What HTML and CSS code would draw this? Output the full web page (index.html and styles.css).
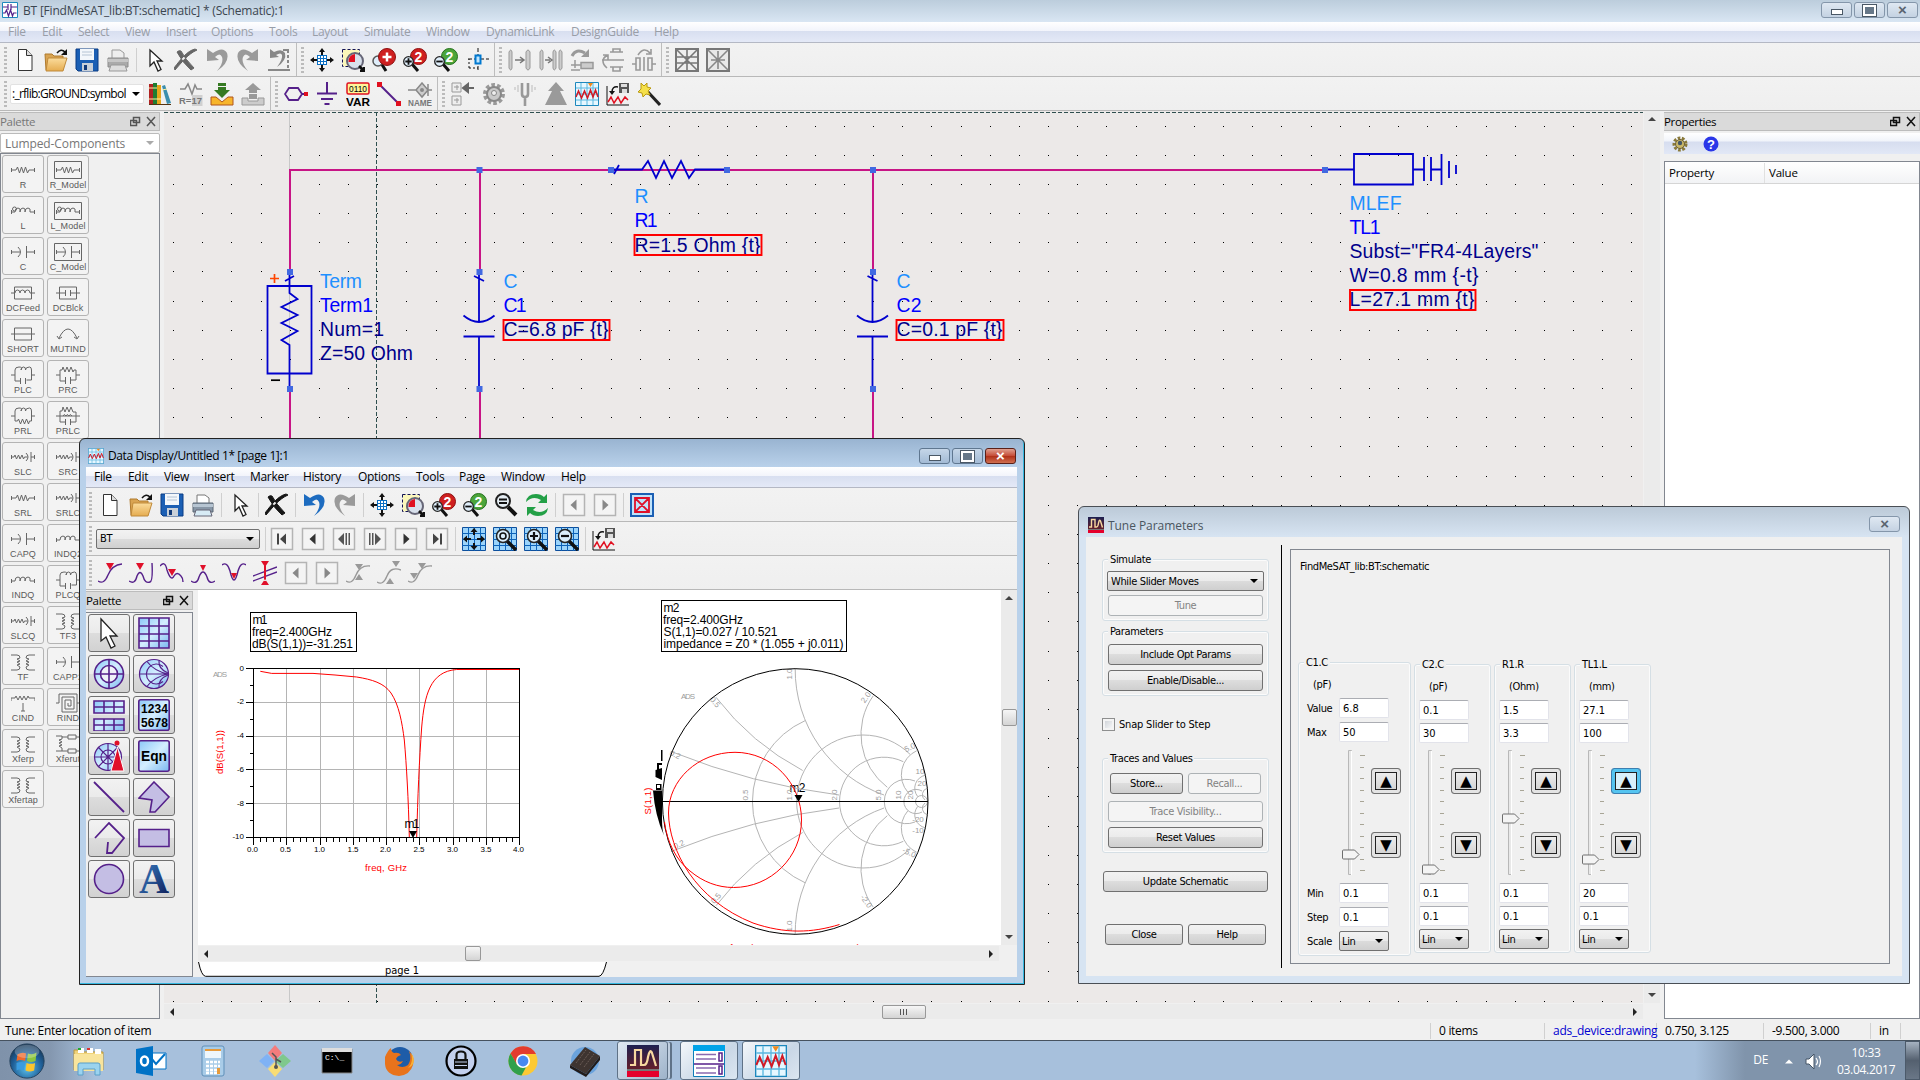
FILE: index.html
```html
<!DOCTYPE html>
<html lang="en">
<head>
<meta charset="utf-8">
<title>BT [FindMeSAT_lib:BT:schematic] * (Schematic):1</title>
<link rel="stylesheet" href="styles.css">
</head>
<body>
<svg class="defs" width="0" height="0" aria-hidden="true">
<defs>
<linearGradient id="gBlue" x1="0" y1="0" x2="1" y2="1"><stop offset="0" stop-color="#8cc8f8"/><stop offset=".5" stop-color="#d4eeff"/><stop offset="1" stop-color="#7ab8f0"/></linearGradient>
<linearGradient id="gFolder" x1="0" y1="0" x2="0" y2="1"><stop offset="0" stop-color="#fbdc9c"/><stop offset="1" stop-color="#e5ac50"/></linearGradient>
<linearGradient id="gLetter" x1="0" y1="0" x2="1" y2="1"><stop offset="0" stop-color="#3f8ad0"/><stop offset="1" stop-color="#0a1550"/></linearGradient>
<radialGradient id="gOrb" cx=".5" cy=".7" r=".7"><stop offset="0" stop-color="#5ec4ee"/><stop offset=".6" stop-color="#1f6099"/><stop offset="1" stop-color="#16324f"/></radialGradient>
<linearGradient id="gAds" x1="0" y1="0" x2="0" y2="1"><stop offset="0" stop-color="#1d2050"/><stop offset="1" stop-color="#641f2c"/></linearGradient>

<symbol id="i-new" viewBox="0 0 24 24"><path d="M5.500 1.500h8l5.500 6v15H5.500z" fill="#fff" stroke="#333"/><path d="M13.500 1.500v6H19" fill="#ddd" stroke="#333"/></symbol>
<symbol id="i-open" viewBox="0 0 24 24"><path d="M1 6h7l2 2h9v14H2z" fill="#d9a452" stroke="#b07a2c"/><path d="M4 10h19l-4 13H2z" fill="url(#gFolder)" stroke="#c08a3a"/><path d="M13 5q4-5 8-1" fill="none" stroke="#111" stroke-width="1.500"/><path d="M23 1v6h-6z" fill="#111"/></symbol>
<symbol id="i-save" viewBox="0 0 24 24"><path d="M1 1h22v22H3l-2-2z" fill="#1b5fb4" stroke="#0b3d84"/><path d="M5 1h14v11H5z" fill="#f3f7fb"/><path d="M7 4h10M7 7h10" stroke="#b5c4d4"/><path d="M7 15h11v8H7z" fill="#c9d0d8"/><path d="M9 17h3v5H9z" fill="#123a78"/></symbol>
<symbol id="i-print" viewBox="0 0 24 24"><path d="M6 10V2h8l4 3v5" fill="#fff" stroke="#777"/><path d="M2 10h20v9H2z" fill="#8796a6" stroke="#5b6774"/><path d="M2 11h20v3H2z" fill="#b7c5d2"/><path d="M5 17h14l2 6H3z" fill="#d7ebf5" stroke="#667"/></symbol>
<symbol id="i-printg" viewBox="0 0 24 24"><path d="M6 10V2h8l4 3v5" fill="#eee" stroke="#999"/><path d="M2 10h20v9H2z" fill="#aaa" stroke="#8c8c8c"/><path d="M2 11h20v3H2z" fill="#c6c6c6"/><path d="M5 17h14l2 6H3z" fill="#ddd" stroke="#999"/></symbol>
<symbol id="i-arrow" viewBox="0 0 24 24"><path d="M7 2v16l4-4 4 9 3-1.500-4-8.500h5z" fill="#fff" stroke="#222" stroke-width="1.300"/></symbol>
<symbol id="i-x" viewBox="0 0 24 24"><path d="M1 22C8 14 14 6 23 2l-2-1C13 3 7 11 0 20zM3 4q2-2 4-1 4 8 13 17l-3 2Q8 14 3 4z" fill="currentColor" stroke="currentColor"/></symbol>
<symbol id="i-undo" viewBox="0 0 24 24"><path d="M2 1v12l12-1-4-3q5-5 7 0 2 6-5 14 13-9 10-18-4-7-14 0z" fill="currentColor"/></symbol>
<symbol id="i-redo" viewBox="0 0 24 24"><path d="M22 1v12l-12-1 4-3q-5-5-7 0-2 6 5 14Q-1 14 2 5q4-7 14 0z" fill="currentColor"/></symbol>
<symbol id="i-undoall" viewBox="0 0 24 24"><path d="M3 1v9l9-1-3-2q5-3 6 0 1 4-5 12 10-7 8-14-3-5-11-1z" fill="currentColor"/><path d="M21 2v18" stroke="currentColor" stroke-width="2" stroke-dasharray="3 2"/><path d="M16 2h6M1 22h22" stroke="currentColor" stroke-width="2"/></symbol>
<symbol id="i-fit" viewBox="0 0 24 24"><path d="M7 7h10v10H7z" fill="#fff"/><path d="M7.500 7v10M10.500 7v10M13.500 7v10M16.500 7v10M7 7.500h10M7 10.500h10M7 13.500h10M7 16.500h10" stroke="#0b6fc4"/><path d="M12 0l3 4h-2v3h-2V4H9zM12 24l3-4h-2v-3h-2v3H9zM0 12l4-3v2h3v2H4v2zM24 12l-4-3v2h-3v2h3v2z" fill="#111"/></symbol>
<symbol id="i-zarea" viewBox="0 0 24 24"><path d="M1.500 1.500h17v17h-17z" fill="#fbf7ba" stroke="#115" stroke-dasharray="3 2"/><circle cx="14" cy="13" r="8" fill="#d8e0ec" stroke="#667" stroke-width="2"/><path d="M14 13V6a7 7 0 0 0-6.500 8H14z" fill="#e01020"/><path d="M18 18l5 5M23 19v4h-4" stroke="#111" stroke-width="2.500"/></symbol>
<symbol id="i-zplus" viewBox="0 0 24 24"><path d="M9 15l5 8" stroke="#111" stroke-width="3"/><circle cx="6" cy="13" r="5" fill="#dfeefa" stroke="#555" stroke-width="1.500"/><circle cx="15" cy="9" r="8.500" fill="#cf1f1f" stroke="#8c1010"/><path d="M15 4.500v9M10.500 9h9" stroke="#fff" stroke-width="2.500"/></symbol>
<symbol id="i-z2r" viewBox="0 0 24 24"><path d="M9 16l6 7" stroke="#111" stroke-width="3"/><circle cx="15.500" cy="8.500" r="8" fill="#cf1f1f" stroke="#8c1010"/><circle cx="5.500" cy="13.500" r="4.800" fill="#dfeefa" stroke="#222" stroke-width="1.300"/><path d="M5.500 10.300v6.400M2.300 13.500h6.400" stroke="#111" stroke-width="1.800"/><text x="11.500" y="14" class="znum">2</text></symbol>
<symbol id="i-z2g" viewBox="0 0 24 24"><path d="M9 16l6 7" stroke="#111" stroke-width="3"/><circle cx="15.500" cy="8.500" r="8" fill="#4ca53a" stroke="#24701c"/><circle cx="5.500" cy="13.500" r="4.800" fill="#dfeefa" stroke="#222" stroke-width="1.300"/><path d="M2.300 13.500h6.400" stroke="#111" stroke-width="1.800"/><text x="11.500" y="14" class="znum">2</text></symbol>
<symbol id="i-center" viewBox="0 0 24 24"><path d="M13 0v24M3 11h21" stroke="#111" stroke-dasharray="4 2"/><path d="M10.500 7.500h5v8h-5z" fill="#bfe6ff" stroke="#0078d0" stroke-width="2"/><path d="M4 20V11M4 20h9" stroke="#111" stroke-dasharray="2 2"/></symbol>
<symbol id="i-bars1" viewBox="0 0 24 24"><path d="M1 4q2-4 3 0v16q-1 4-3 0zM18 4q2-4 4 0v16q-2 4-4 0z" fill="#ccc" stroke="#999"/><path d="M7 12h8M12 9l4 3-4 3" stroke="#777" stroke-width="1.500" fill="none"/></symbol>
<symbol id="i-bars2" viewBox="0 0 24 24"><path d="M1 4q2-4 3 0v16q-1 4-3 0zM14 4q1-4 3 0v16q-2 4-3 0zM20 4q1-4 3 0v16q-2 4-3 0z" fill="#ccc" stroke="#999"/><path d="M6 12h5M9 9l4 3-4 3" stroke="#777" stroke-width="1.500" fill="none"/></symbol>
<symbol id="i-rot" viewBox="0 0 24 24"><path d="M2 8q4-8 13-3" fill="none" stroke="#999" stroke-width="3"/><path d="M19 1v8h-8z" fill="#999"/><path d="M11 14.500h12v6H11zM5 12v8M1 17h10M1 22h9" fill="#ccc" stroke="#999" stroke-width="1.500"/></symbol>
<symbol id="i-flipv" viewBox="0 0 24 24"><path d="M9 4h13M12 1h7v3h-7zM9 19h13M12 19h7v4h-7zM6 20q-8-7 0-13M1 12h22M2 7h5v5" fill="none" stroke="#999" stroke-width="1.600"/></symbol>
<symbol id="i-fliph" viewBox="0 0 24 24"><path d="M4 10h4v12H4zM16 10h4v12h-4zM0 16h4M20 16h4M12 9v14M6 7q6-9 12-2M19 1v5h-5" fill="none" stroke="#999" stroke-width="1.600"/></symbol>
<symbol id="i-deact" viewBox="0 0 24 24"><path d="M1 1h22v22H1z" fill="#eee" stroke="#777" stroke-width="2"/><path d="M2 2l20 20M22 2L2 22M2 9h20M2 15h20M12 2v20" stroke="#777" stroke-width="1.600"/></symbol>
<symbol id="i-deact2" viewBox="0 0 24 24"><path d="M1 1h22v22H1z" fill="#e8e8e8" stroke="#777" stroke-width="2"/><path d="M2 2l20 20M22 2L2 22M5 12h14M12 3v18" stroke="#888" stroke-width="1.600"/></symbol>
<symbol id="i-books" viewBox="0 0 24 24"><path d="M1 2h4v20H1z" fill="#b02222"/><path d="M5 1h4v21H5z" fill="#1f7d32"/><path d="M9 3h4v19H9z" fill="#e6a51a"/><path d="M14 4l3-1 6 18-4 1z" fill="#3c8fae"/><path d="M1 6h8M1 17h12M14 8l5-1" stroke="#fff2a0"/><path d="M1 22.500h22" stroke="#531"/></symbol>
<symbol id="i-r17" viewBox="0 0 24 24"><path d="M1 7h5l3-5 4 10 3-9 2 4h5" fill="none" stroke="#888" stroke-width="1.500"/><path d="M13 13h10.500v11H13z" fill="#d0d0d0"/><text x="0" y="22" class="ib" textLength="23" lengthAdjust="spacingAndGlyphs">R=17</text></symbol>
<symbol id="i-down" viewBox="0 0 24 24"><path d="M8 1h8v3H8zM8 5h8v3h4l-8 8-8-8h4z" fill="#357a22"/><path d="M1 15h5l6 5 6-5h5v8H1z" fill="#f7b52c" stroke="#b0541c"/></symbol>
<symbol id="i-up" viewBox="0 0 24 24"><path d="M12 1l8 7h-4v3H8V8H4zM8 12h8v5H8z" fill="#999"/><path d="M1 16h6v3h10v-3h6v7H1z" fill="#ccc" stroke="#999"/></symbol>
<symbol id="i-port" viewBox="0 0 24 24"><path d="M5 6h9l4 6-4 6H5l-4-6zM18 12h4" fill="none" stroke="#55208a" stroke-width="1.800"/><path d="M20 10h4v4h-4z" fill="#e01020"/></symbol>
<symbol id="i-gnd" viewBox="0 0 24 24"><path d="M12 0v11M2 11.500h20M6 17h12M9.500 22h5" stroke="#55208a" stroke-width="2" fill="none"/></symbol>
<symbol id="i-var" viewBox="0 0 24 24"><rect x="1" y="1" width="22" height="11" rx="1.500" fill="#fff59a" stroke="#e01020" stroke-width="1.500"/><text x="3" y="10" class="v1" textLength="18" lengthAdjust="spacingAndGlyphs">0110</text><text x="0" y="23.500" class="v2" textLength="24" lengthAdjust="spacingAndGlyphs">VAR</text></symbol>
<symbol id="i-wire" viewBox="0 0 24 24"><path d="M2 2l20 20" stroke="#55208a" stroke-width="2"/><path d="M0 0h5v5H0zM19 19h5v5h-5z" fill="#e01020"/></symbol>
<symbol id="i-name" viewBox="0 0 24 24"><path d="M0 8h9M14 1l6 7-6 7-6-7zM20 8h4M20 2v12" fill="#ccc" stroke="#888" stroke-width="1.500"/><circle cx="14" cy="8" r="2" fill="#888"/><text x="0" y="24" class="ib" textLength="24" lengthAdjust="spacingAndGlyphs">NAME</text></symbol>
<symbol id="i-hier" viewBox="0 0 24 24"><path d="M1 1h9v9H1zM1 14h9v9H1zM3 5h5M3 18h5M6 3v5M6 16v5" fill="#eee" stroke="#999"/><path d="M23 6h-7M17 2l-5 4 5 4z" fill="#666" stroke="#666" stroke-width="2"/></symbol>
<symbol id="i-gear" viewBox="0 0 24 24"><circle cx="12" cy="12" r="9" fill="none" stroke="#999" stroke-width="4" stroke-dasharray="3.500 2.150"/><circle cx="12" cy="12" r="7" fill="#c9c9c9" stroke="#888" stroke-width="2"/><circle cx="12" cy="11" r="2.500" fill="#eee" stroke="#888"/></symbol>
<symbol id="i-fork" viewBox="0 0 24 24"><path d="M9 1v11q0 3 3 3t3-3V1M12 15v9" fill="none" stroke="#999" stroke-width="2.600"/><path d="M5 3v7M2 5v3M19 3v7M22 5v3" stroke="#bbb"/></symbol>
<symbol id="i-upbig" viewBox="0 0 24 24"><path d="M12 0l8 9h-4l7 14H1L8 9H4z" fill="#9a9a9a"/></symbol>
<symbol id="i-plot" viewBox="0 0 24 24"><path d="M.5.500h23v23H.5z" fill="#e6f7ff" stroke="#1d88bd"/><path d="M6 1v22M12 1v22M18 1v22M1 6h22M1 12h22M1 18h22" stroke="#59b7df"/><path d="M1 15l2.500-6 3 7 3-7 3 7 3-8 2.500 7 2.500-7 2.500 7" fill="none" stroke="#d01a26" stroke-width="1.500"/><path d="M13 1h5l-2.500 4z" fill="#f18a1c"/></symbol>
<symbol id="i-plotsave" viewBox="0 0 24 24"><path d="M1 4v19h22" fill="none" stroke="#111"/><path d="M2 20l3-5 3 6 4-6 3 6 4-6 3 3" fill="none" stroke="#e01020" stroke-width="1.500"/><path d="M13 1h10v10H13z" fill="#555"/><path d="M15 2h6v3h-6zM16 7h5v4h-5z" fill="#ddd"/><path d="M12 5q-6-1-6 5" fill="none" stroke="#111" stroke-width="1.500"/><path d="M3 9h6l-3 4z" fill="#111"/></symbol>
<symbol id="i-wand" viewBox="0 0 24 24"><path d="M11 10l12 13" stroke="#222" stroke-width="3"/><path d="M4 1l3 3 3-3 0 4 4 1-3 3 2 4-4-1-3 3-1-4-4-1 3-3z" fill="#f5e04a" stroke="#b99a12"/></symbol>
<symbol id="i-zeq" viewBox="0 0 24 24"><path d="M14 14l8 8" stroke="#111" stroke-width="4"/><circle cx="9" cy="8" r="7" fill="#e6eef4" stroke="#222" stroke-width="2"/><path d="M5 6.500h8M5 10h8" stroke="#111" stroke-width="2"/></symbol>
<symbol id="i-refresh" viewBox="0 0 24 24"><path d="M1 9q1-8 10-8 5 0 8 3l3-3v9h-9l3-3q-8-5-15 2zM23 15q-1 8-10 8-5 0-8-3l-3 3v-9h9l-3 3q8 5 15-2z" fill="#23a047"/></symbol>
<symbol id="i-nbox" viewBox="0 0 24 24"><path d="M1 1h22v22H1z" fill="#bfe3fb" stroke="#1b5fb4" stroke-width="2"/><path d="M5 5h14v14H5zM5 5l14 14M19 5L5 19" fill="none" stroke="#e0102a" stroke-width="1.800"/></symbol>
<symbol id="i-left" viewBox="0 0 24 24"><path d="M1.500 1.500h21v21h-21z" fill="#f4f4f4" stroke="#b4b4b4" stroke-width="1.500"/><path d="M14.500 6.500v11l-6-5.500z" fill="currentColor"/></symbol>
<symbol id="i-right" viewBox="0 0 24 24"><path d="M1.500 1.500h21v21h-21z" fill="#f4f4f4" stroke="#b4b4b4" stroke-width="1.500"/><path d="M9.500 6.500v11l6-5.500z" fill="currentColor"/></symbol>
<symbol id="i-first" viewBox="0 0 24 24"><path d="M1.500 1.500h21v21h-21z" fill="#f4f4f4" stroke="#b4b4b4" stroke-width="1.500"/><path d="M7 6.500h2v11H7zM16 6.500v11l-6-5.500z" fill="#444"/></symbol>
<symbol id="i-last" viewBox="0 0 24 24"><path d="M1.500 1.500h21v21h-21z" fill="#f4f4f4" stroke="#b4b4b4" stroke-width="1.500"/><path d="M15 6.500h2v11h-2zM8 6.500v11l6-5.500z" fill="#444"/></symbol>
<symbol id="i-prev" viewBox="0 0 24 24"><path d="M1.500 1.500h21v21h-21z" fill="#f4f4f4" stroke="#b4b4b4" stroke-width="1.500"/><path d="M12 6v12l-6-6zM13.500 6h1.500v12h-1.500zM16.500 6H18v12h-1.500z" fill="#555"/></symbol>
<symbol id="i-next" viewBox="0 0 24 24"><path d="M1.500 1.500h21v21h-21z" fill="#f4f4f4" stroke="#b4b4b4" stroke-width="1.500"/><path d="M12 6v12l6-6zM6 6h1.500v12H6zM9 6h1.500v12H9z" fill="#555"/></symbol>
<symbol id="i-grid" viewBox="0 0 24 24"><path d="M.5.500h23v23H.5z" fill="#9bd4fb" stroke="#0e4f9c"/><path d="M6.500 0v24M12.500 0v24M18.500 0v24M0 6.500h24M0 12.500h24M0 18.500h24" stroke="#0d62b8"/></symbol>
<symbol id="i-gfit" viewBox="0 0 24 24"><use href="#i-grid"/><path d="M12 1l3.500 4H13v3h-2V5H8.500zM12 23l3.500-4H13v-3h-2v3H8.500zM1 12l4-3.500V11h4v2H5v2.500zM23 12l-4-3.500V11h-4v2h4v2.500z" fill="#111"/></symbol>
<symbol id="i-gmag" viewBox="0 0 24 24"><use href="#i-grid"/><path d="M14 14l9 9" stroke="#111" stroke-width="3.500"/><circle cx="10" cy="9" r="6.500" fill="#dbeefb" stroke="#222" stroke-width="1.500"/></symbol>
<symbol id="i-ga" viewBox="0 0 24 24"><use href="#i-gmag"/><circle cx="10" cy="9" r="3" fill="none" stroke="#111" stroke-width="1.600"/></symbol>
<symbol id="i-gp" viewBox="0 0 24 24"><use href="#i-gmag"/><path d="M6 9h8M10 5v8" stroke="#111" stroke-width="2.200"/></symbol>
<symbol id="i-gm" viewBox="0 0 24 24"><use href="#i-gmag"/><path d="M6 9h8" stroke="#111" stroke-width="2.200"/></symbol>
<symbol id="m-1" viewBox="0 0 24 24"><path d="M0 20q6 4 10-6T24 3" class="mk"/><path d="M8 2h8l-4 7z" fill="#e0102a"/></symbol>
<symbol id="m-2" viewBox="0 0 24 24"><path d="M0 20q6 4 8-5 3-7 6 0 2 8 7 6 3-1 2-19" class="mk"/><path d="M7 2h8l-4 7z" fill="#e0102a"/></symbol>
<symbol id="m-3" viewBox="0 0 24 24"><path d="M0 5q5-6 7 4 4 12 7 6 3-5 7 0 2 2 2 6" class="mk"/><path d="M8 8h8l-4 7z" fill="#e0102a"/></symbol>
<symbol id="m-4" viewBox="0 0 24 24"><path d="M0 20q6 4 8-4 4-10 8 0 2 8 8 4" class="mk"/><path d="M9 4h6l-3 6z" fill="#e0102a"/></symbol>
<symbol id="m-5" viewBox="0 0 24 24"><path d="M0 4q5-4 8 6 4 18 8 0 3-10 8-6" class="mk"/><path d="M9 12h6l-3 6z" fill="#e0102a"/></symbol>
<symbol id="m-6" viewBox="0 0 24 24"><path d="M0 15L24 6M0 20L24 11" class="mk"/><path d="M8 0h8l-4 6zM8 24h8l-4-6zM11 4h2v16h-2z" fill="#e0102a"/></symbol>
<symbol id="m-7" viewBox="0 0 24 24"><path d="M0 20q6 4 10-6T24 5" class="mkg"/><path d="M9 3h8l-4 6zM9 19h8l-4-6z" fill="#999"/></symbol>
<symbol id="m-8" viewBox="0 0 24 24"><path d="M0 21q6 4 10-6T24 9" class="mkg"/><path d="M15 0h8l-4 6zM9 23h8l-4-6z" fill="#999"/></symbol>
<symbol id="m-9" viewBox="0 0 24 24"><path d="M0 20q6 4 10-6T24 5" class="mkg"/><path d="M10 2h8l-4 6zM2 12h8l-4 6z" fill="#999"/></symbol>

<symbol id="c-zig" viewBox="0 0 24 20"><path d="M0 10h5l1.500-3 2 6 2-6 2 6 2-6 2 6 1.500-3h6M.5 8v4M23.500 8v4" class="cp"/></symbol>
<symbol id="c-ind" viewBox="0 0 24 20"><path d="M0 11h4q0-4 3-4t2 4q0-4 3-4t2 4q0-4 3-4t2 4h5M.5 9v4M23.500 9v4" class="cp"/></symbol>
<symbol id="c-l" viewBox="0 0 24 20"><use href="#c-ind"/><circle cx="3.500" cy="8" r="2" class="cp"/></symbol>
<symbol id="c-cap" viewBox="0 0 24 20"><path d="M0 10h9M7 5q5 5 0 10M15.500 4v12M15.500 10H24M.5 8v4M23.500 8v4" class="cp"/></symbol>
<symbol id="c-boxed" viewBox="0 0 28 20"><path d="M.5 1.500h27v17H.5z" class="cp"/></symbol>
<symbol id="c-dcf" viewBox="0 0 24 20"><path d="M3.500 4h17v12h-17zM0 10h4q0-3 2.500-3t2.500 3q0-3 2.500-3t2.500 3q0-3 2.500-3t2.500 3h5" class="cp"/></symbol>
<symbol id="c-dcb" viewBox="0 0 24 20"><path d="M3.500 4h17v12h-17zM0 10h9M9.500 7v6M14.500 7v6M14.500 10H24" class="cp"/></symbol>
<symbol id="c-short" viewBox="0 0 24 20"><path d="M3.500 4h17v12h-17zM0 10h24" class="cp"/></symbol>
<symbol id="c-mut" viewBox="0 0 24 20"><path d="M3 14q9-18 18 0M1 12l2 3 3-2M18 13l3 2 2-3" class="cp"/></symbol>
<symbol id="c-plc" viewBox="0 0 24 20"><path d="M0 10h4V5q0-3 4-3t2 3q0-3 2.500-3t2 3q0-3 4-3 2 0 2 3v10h-5M4 10v6h5M9.500 13v6M14.500 13v6M20 10h4" class="cp"/></symbol>
<symbol id="c-prc" viewBox="0 0 24 20"><path d="M0 10h4V5h2l1-3 2 5 2-5 2 5 2-5 2 5 1-2h2v10h-6M4 10v6h5M9.500 12v7M14.500 12v7M20 10h4" class="cp"/></symbol>
<symbol id="c-prl" viewBox="0 0 24 20"><path d="M0 10h4V5q0-3 4-3t2 3q0-3 2.500-3t2 3q0-3 4-3 2 0 2 3v10h-2l-1 3-2-5-2 5-2-5-2 5-2-5-1 2H4V10M20 10h4" class="cp"/></symbol>
<symbol id="c-prlc" viewBox="0 0 24 20"><path d="M0 10h24M4 5v11h5M4 5h2l1-4 2 5 2-5 2 5 2-5 2 5h3v10h-5M9.500 13v6M14.500 13v6M7 10q1-3 3 0 1-3 3 0 1-3 3 0" class="cp"/></symbol>
<symbol id="c-slc" viewBox="0 0 24 20"><path d="M0 10h3l1-2 1.500 4 2-4 1.500 4 2-4 1.500 4 1-2h3M15 6q4 4 0 8M20 5v10M20 10h4M.5 8v4M23.500 8v4" class="cp"/></symbol>
<symbol id="c-tf" viewBox="0 0 24 20"><path d="M0 3h6q3 0 3 3l-3 1 3 2-3 1 3 2-3 1 3 2q0 3-3 3H0M24 3h-6q-3 0-3 3l3 1-3 2 3 1-3 2 3 1-3 2q0 3 3 3h6" class="cp"/></symbol>
<symbol id="c-cind" viewBox="0 0 24 20"><path d="M0 8V5h4l1-2 2 4 2-4 2 4 2-4 2 4 2-4 1 2h6v3M12 10v8M10 18h4" class="cp"/></symbol>
<symbol id="c-rind" viewBox="0 0 24 20"><path d="M0 10h3V1h18v18H6V4h12v12H9V7h6v6h-3v-3M21 10h3" class="cp"/></symbol>
<symbol id="c-xu" viewBox="0 0 24 20"><path d="M0 2h6v3l-3 1 3 2-3 1 3 2-3 1 3 2v3H0M6 3h6M20 3h4v14h-4M12 1h8v4h-8zM12 15h8v4h-8zM6 17h6" class="cp"/></symbol>
</defs>
</svg>

<div class="screen">
  <header class="titlebar inactive">
    <svg class="ti" viewBox="0 0 16 16"><path d="M.5.500h15v15H.5z" fill="#fff" stroke="#1d88bd"/><path d="M1 5h5M6 2v6M9 2v6M9 5h6M1 11l2 0 1.500-3 2 6 2-6 2 6 1-3h3" fill="none" stroke="#55208a" stroke-width="1.200"/></svg>
    <span class="tt">BT [FindMeSAT_lib:BT:schematic] * (Schematic):1</span>
    <div class="wbtns"><i class="min"></i><i class="max"></i><i class="cls">×</i></div>
  </header>
  <nav class="menubar dis">
    <span style="width:34px">File</span><span style="width:36px">Edit</span><span style="width:47px">Select</span><span style="width:41px">View</span><span style="width:45px">Insert</span><span style="width:58px">Options</span><span style="width:43px">Tools</span><span style="width:52px">Layout</span><span style="width:62px">Simulate</span><span style="width:60px">Window</span><span style="width:85px">DynamicLink</span><span style="width:83px">DesignGuide</span><span>Help</span>
  </nav>
  <div class="tb">
    <div class="grp"><i class="hd"></i><svg class="ic"><use href="#i-new"/></svg><svg class="ic"><use href="#i-open"/></svg><svg class="ic"><use href="#i-save"/></svg><svg class="ic"><use href="#i-printg"/></svg><i class="sep"></i><svg class="ic"><use href="#i-arrow"/></svg><svg class="ic g6"><use href="#i-x"/></svg><svg class="ic g9"><use href="#i-undo"/></svg><svg class="ic g9"><use href="#i-redo"/></svg><svg class="ic g8"><use href="#i-undoall"/></svg></div>
    <div class="grp"><i class="hd"></i><svg class="ic"><use href="#i-fit"/></svg><svg class="ic"><use href="#i-zarea"/></svg><svg class="ic"><use href="#i-zplus"/></svg><svg class="ic"><use href="#i-z2r"/></svg><svg class="ic"><use href="#i-z2g"/></svg><svg class="ic"><use href="#i-center"/></svg></div>
    <div class="grp"><i class="hd"></i><svg class="ic"><use href="#i-bars1"/></svg><svg class="ic"><use href="#i-bars2"/></svg><svg class="ic"><use href="#i-rot"/></svg><svg class="ic"><use href="#i-flipv"/></svg><svg class="ic"><use href="#i-fliph"/></svg></div>
    <div class="grp last"><i class="hd"></i><svg class="ic"><use href="#i-deact"/></svg><svg class="ic"><use href="#i-deact2"/></svg></div>
  </div>
  <div class="tb">
    <div class="grp"><i class="hd"></i><div class="combo plain lib"><span>:_rflib:GROUND:symbol</span></div><svg class="ic"><use href="#i-books"/></svg><svg class="ic"><use href="#i-r17"/></svg><svg class="ic"><use href="#i-down"/></svg><svg class="ic"><use href="#i-up"/></svg></div>
    <div class="grp"><i class="hd"></i><svg class="ic"><use href="#i-port"/></svg><svg class="ic"><use href="#i-gnd"/></svg><svg class="ic"><use href="#i-var"/></svg><svg class="ic"><use href="#i-wire"/></svg><svg class="ic"><use href="#i-name"/></svg></div>
    <div class="grp last"><i class="hd"></i><svg class="ic"><use href="#i-hier"/></svg><svg class="ic"><use href="#i-gear"/></svg><svg class="ic"><use href="#i-fork"/></svg><svg class="ic"><use href="#i-upbig"/></svg><svg class="ic"><use href="#i-plot"/></svg><svg class="ic"><use href="#i-plotsave"/></svg><svg class="ic"><use href="#i-wand"/></svg></div>
  </div>

  <main class="work">
    <aside class="comp">
      <div class="dock dis"><span>Palette</span><svg viewBox="0 0 26 12"><path d="M3.500 1.500h6v5h-6zM.5 4.500h6v5h-6z" class="dk"/><path d="M17 1l8 9M25 1l-8 9" class="dk"/></svg></div>
      <div class="combo plain cat"><span>Lumped-Components</span></div>
      <div class="cgrid">
        <div class="cb"><svg><use href="#c-zig"/></svg>R</div><div class="cb"><svg><use href="#c-zig"/></svg><svg class="fr"><use href="#c-boxed"/></svg>R_Model</div>
        <div class="cb"><svg><use href="#c-l"/></svg>L</div><div class="cb"><svg><use href="#c-l"/></svg><svg class="fr"><use href="#c-boxed"/></svg>L_Model</div>
        <div class="cb"><svg><use href="#c-cap"/></svg>C</div><div class="cb"><svg><use href="#c-cap"/></svg><svg class="fr"><use href="#c-boxed"/></svg>C_Model</div>
        <div class="cb"><svg><use href="#c-dcf"/></svg>DCFeed</div><div class="cb"><svg><use href="#c-dcb"/></svg>DCBlck</div>
        <div class="cb"><svg><use href="#c-short"/></svg>SHORT</div><div class="cb"><svg><use href="#c-mut"/></svg>MUTIND</div>
        <div class="cb"><svg><use href="#c-plc"/></svg>PLC</div><div class="cb"><svg><use href="#c-prc"/></svg>PRC</div>
        <div class="cb"><svg><use href="#c-prl"/></svg>PRL</div><div class="cb"><svg><use href="#c-prlc"/></svg>PRLC</div>
        <div class="cb"><svg><use href="#c-slc"/></svg>SLC</div><div class="cb"><svg><use href="#c-slc"/></svg>SRC</div>
        <div class="cb"><svg><use href="#c-zig"/></svg>SRL</div><div class="cb"><svg><use href="#c-slc"/></svg>SRLC</div>
        <div class="cb"><svg><use href="#c-cap"/></svg>CAPQ</div><div class="cb"><svg><use href="#c-ind"/></svg>INDQ2</div>
        <div class="cb"><svg><use href="#c-ind"/></svg>INDQ</div><div class="cb"><svg><use href="#c-plc"/></svg>PLCQ</div>
        <div class="cb"><svg><use href="#c-slc"/></svg>SLCQ</div><div class="cb"><svg><use href="#c-tf"/></svg>TF3</div>
        <div class="cb"><svg><use href="#c-tf"/></svg>TF</div><div class="cb"><svg><use href="#c-cap"/></svg>CAPP2</div>
        <div class="cb"><svg><use href="#c-cind"/></svg>CIND</div><div class="cb"><svg><use href="#c-rind"/></svg>RIND</div>
        <div class="cb"><svg><use href="#c-tf"/></svg>Xferp</div><div class="cb"><svg><use href="#c-xu"/></svg>Xferut</div>
        <div class="cb"><svg><use href="#c-tf"/></svg>Xfertap</div>
      </div>
    </aside>

    <section class="sheet">
      <div class="sheetrow">
      <svg class="schem" viewBox="164 111 1479 892" width="1479" height="892">
        <path d="M289.500 111V1003" stroke="#c8c8c8"/>
        <path shape-rendering="crispEdges" stroke="#000" stroke-dasharray="1 28.1667" d="M173 126.500H1643M173 155.500H1643M173 184.500H1643M173 213.500H1643M173 242.500H1643M173 271.500H1643M173 301.500H1643M173 330.500H1643M173 359.500H1643M173 388.500H1643M173 417.500H1643M173 446.500H1643M173 476.500H1643M173 505.500H1643M173 534.500H1643M173 563.500H1643M173 592.500H1643M173 621.500H1643M173 651.500H1643M173 680.500H1643M173 709.500H1643M173 738.500H1643M173 767.500H1643M173 796.500H1643M173 826.500H1643M173 855.500H1643M173 884.500H1643M173 913.500H1643M173 942.500H1643M173 971.500H1643M173 1001.500H1643"/>
        <path d="M164 112.500H1643M376.500 112V1003" stroke="#2f4f4f" stroke-dasharray="4 2"/>
        <path d="M290 272V170H1326M480 170V272M873 170V272M290 389V460M480 389V460M873 389V460" fill="none" stroke="#c71585" stroke-width="2"/>
        <g fill="none" stroke="#0000cd" stroke-width="1.800">
          <path d="M267.500 286h44v87.500h-44zM289.500 272v21l8 6-16 8 16 8-16 8 16 8-16 9 8 5v44M285 281l9-5"/>
          <path id="cap" d="M479 272v50M474 276l10 5M463.500 315.500q15.500 13 31 0M463.500 336.500h31M479 336.500V389"/>
          <use href="#cap" x="393.500"/>
          <path d="M611 169.500h31l6-8.500 8 17 8-17 8 17 9-17 8 17 6-8.500h32M614 174l5-9"/>
          <path d="M1325 169.500h29M1354 154h59v30.500h-59zM1413 169.500h11M1424 157v24M1431 157v24M1431 169.500h10M1441.500 154v31M1449 161v17M1456 165v9"/>
        </g>
        <path d="M287 269h6v6h-6zM287 386h6v6h-6zM476.500 167h6v6h-6zM476.500 269h6v6h-6zM476.500 386h6v6h-6zM870 167h6v6h-6zM870 269h6v6h-6zM870 386h6v6h-6zM608 167h6v6h-6zM724 167h6v6h-6zM1322 167h6v6h-6z" fill="#4169e1"/>
        <path d="M270 278.500h9M274.500 274v9" stroke="#ff4500" stroke-width="1.700"/><path d="M271 380.200h9" stroke="#000" stroke-width="1.700"/>
        <g class="st">
          <text class="a" x="320" y="288" textLength="42">Term</text><text class="b" x="320" y="312" textLength="53">Term1</text><text x="320" y="336" textLength="64">Num=1</text><text x="320" y="360" textLength="93">Z=50 Ohm</text>
          <text class="a" x="503.500" y="288">C</text><text class="b" x="503.500" y="312" textLength="23">C1</text><text x="503.500" y="336" textLength="105">C=6.8 pF {t}</text>
          <text class="a" x="634.500" y="203">R</text><text class="b" x="634.500" y="227" textLength="23">R1</text><text x="634.500" y="252" textLength="126">R=1.5 Ohm {t}</text>
          <text class="a" x="896.500" y="288">C</text><text class="b" x="896.500" y="312" textLength="25">C2</text><text x="896.500" y="336" textLength="106">C=0.1 pF {t}</text>
          <text class="a" x="1349.500" y="210" textLength="52">MLEF</text><text class="b" x="1349.500" y="234" textLength="31">TL1</text><text x="1349.500" y="258" textLength="189">Subst="FR4-4Layers"</text><text x="1349.500" y="282" textLength="129">W=0.8 mm {-t}</text><text x="1349.500" y="306" textLength="125">L=27.1 mm {t}</text>
        </g>
        <path d="M503.500 320h106v20h-106zM634.500 235h127v20h-127zM896.500 320h107v20h-107zM1350 290h125.500v20H1350z" fill="none" stroke="#f00" stroke-width="1.900"/>
      </svg>
      <div class="vs"><b class="au"></b><b class="ad"></b></div>
      </div>
      <div class="hs"><b class="al"></b><i class="thumb"></i><b class="ar"></b></div>
    </section>

    <aside class="props">
      <div class="dock"><span>Properties</span><svg viewBox="0 0 26 12"><path d="M3.500 1.500h6v5h-6zM.5 4.500h6v5h-6z" class="dk"/><path d="M17 1l8 9M25 1l-8 9" class="dk"/></svg></div>
      <div class="ptools"><svg viewBox="0 0 16 16" width="16" height="16"><circle cx="8" cy="8" r="6" fill="none" stroke="#8a7a3a" stroke-width="3" stroke-dasharray="2.700 1.500"/><circle cx="8" cy="8" r="4.500" fill="#c9b768" stroke="#6a5e34"/><circle cx="8" cy="7" r="2.200" fill="#456"/></svg><svg viewBox="0 0 16 16" width="16" height="16"><circle cx="8" cy="8" r="7.500" fill="#2a36e8"/><text x="8" y="12.500" text-anchor="middle" class="q">?</text></svg></div>
      <div class="ptable"><div class="phead"><span>Property</span><span>Value</span></div></div>
    </aside>
  </main>

  <footer class="status"><span class="grow">Tune: Enter location of item</span><span style="width:114px">0 items</span><span class="lnk" style="width:112px">ads_device:drawing</span><span style="width:107px">0.750, 3.125</span><span style="width:107px">-9.500, 3.000</span><span style="width:30px">in</span><span style="width:19px" class="grip"></span></footer>

  <div class="taskbar">
    <svg class="orb" viewBox="0 0 40 40"><circle cx="20" cy="20" r="18" fill="url(#gOrb)" stroke="#23405c"/><path d="M10 13q5-3 9-1l-1 8q-5-2-9 0z" fill="#ec6a2c"/><path d="M21 12q5 2 9-1l-1 9q-5 2-9 0z" fill="#8cc63f"/><path d="M9 22q5-2 9 0l-1 8q-5-2-8 0z" fill="#3a9be0"/><path d="M19.500 22q5 2 9 0l-1 8q-5 2-9 0z" fill="#fbc52d"/><ellipse cx="20" cy="10" rx="13" ry="7" fill="#fff" opacity=".25"/></svg>
    <svg class="ta" viewBox="0 0 32 32"><path d="M1 5h8l2 2h19v18H1z" fill="#efd27a" stroke="#b9973c"/><path d="M5 3h6v5H5zM14 3h6v5h-6zM22 4h6v5h-6z" fill="#fff"/><path d="M5 3h3v2H5z" fill="#2a3"/><path d="M14 3h3v2h-3z" fill="#d33"/><path d="M1 9h29v17H1z" fill="#f8e49c"/><path d="M5 30V20q0-2 2-2h18q2 0 2 2v10h-5v-6H10v6z" fill="#9bd3ef" stroke="#5a9fc8"/></svg>
    <svg class="ta" viewBox="0 0 32 32"><path d="M14 8h17v16H14z" fill="#fff" stroke="#0072c6"/><path d="M16 13l5 6 9-10" fill="none" stroke="#0072c6" stroke-width="2"/><path d="M1 4l17-3v30L1 28z" fill="#0072c6"/><ellipse cx="9.500" cy="16" rx="3.500" ry="4.500" fill="none" stroke="#fff" stroke-width="2.500"/></svg>
    <svg class="ta" viewBox="0 0 32 32"><rect x="5" y="1" width="22" height="30" rx="2" fill="#a9cce8" stroke="#5f8fb8"/><path d="M8 4h16v9H8z" fill="#eef6fb"/><path d="M8 4h16v2H8z" fill="#e69a3a"/><path d="M9 17h14M9 21h14M9 25h14M9 28h14" stroke="#fff" stroke-width="2.500" stroke-dasharray="3 1"/><path d="M20 23h3v6h-3z" fill="#e69a3a"/></svg>
    <svg class="ta" viewBox="0 0 32 32"><path d="M16 0l7 8-7 8-7-8z" fill="#f47c7c"/><path d="M8 9l7 7-7 7-8-7z" fill="#7fb2f5"/><path d="M24 9l8 7-8 7-8-7z" fill="#7fc88c"/><path d="M16 17l7 7-7 8-7-8z" fill="#f8dd74"/><path d="M13 8l4 4v10M17 14l5 3" stroke="#555" stroke-width="1.500" fill="none"/><circle cx="17" cy="22" r="2" fill="#555"/></svg>
    <svg class="ta" viewBox="0 0 32 32"><path d="M1 4h30v24H1z" fill="#000" stroke="#888"/><path d="M1 3h30v4H1z" fill="#ddd"/><text x="4" y="15" class="cmd">C:\_</text></svg>
    <svg class="ta" viewBox="0 0 32 32"><circle cx="17" cy="15" r="13" fill="#1e5ca8"/><path d="M2 12q3-7 6-9 0 4 3 5 5-1 7 2-4 1-5 4 2 4 7 2-2 4-6 4 5 4 11 0 4-6 1-14 6 6 4 14-3 10-14 11Q3 30 2 19z" fill="#e8731c"/><path d="M28 8q3 9-3 15 8-3 5-12z" fill="#f9b233"/></svg>
    <svg class="ta" viewBox="0 0 32 32"><circle cx="16" cy="16" r="14.500" fill="#c3d0ee" stroke="#000" stroke-width="2.200"/><path d="M11.500 14v-4q0-3.500 4.500-3.500t4.500 3.500v4" fill="none" stroke="#111" stroke-width="2.200"/><path d="M9 14h14v10H9z" fill="#111"/><path d="M10 17h12M10 20.500h12" stroke="#c3d0ee"/></svg>
    <svg class="ta" viewBox="0 0 32 32"><circle cx="16" cy="16" r="14.500" fill="#fcc934"/><path d="M3.500 8.500a14.500 14.500 0 0 1 25.500.500H16l-6 11z" fill="#e33b2e"/><path d="M3.500 8.500a14.500 14.500 0 0 0 11 22l6-11H10z" fill="#30a04c"/><circle cx="16" cy="16" r="7" fill="#fff"/><circle cx="16" cy="16" r="5.400" fill="#4688f1"/></svg>
    <svg class="ta" viewBox="0 0 32 32"><circle cx="16" cy="16" r="14" fill="#6ba3dc"/><path d="M1 20L16 2l15 9-14 18z" fill="#3e3430"/><path d="M7 18l10-13M11 20l10-13M15 22l10-13" stroke="#6a5c56" stroke-dasharray="2 1"/><path d="M1 20v3l16 9 14-17v-4L17 29z" fill="#221c1a"/></svg>
    <div class="tbtn stack"><svg viewBox="0 0 32 32"><path d="M0 0h32v24H0z" fill="url(#gAds)"/><path d="M0 24h32v2H0z" fill="#777"/><path d="M0 26h32v6H0z" fill="#e4002b"/><path d="M3 20h5V5h6v15h3q3 0 4-8 2-9 4-4l4 13" fill="none" stroke="#f8d8a0" stroke-width="2.200"/></svg></div>
    <div class="tbtn"><svg viewBox="0 0 32 32"><path d="M.5.500h31v31H.5z" fill="#fff" stroke="#0f7db8"/><path d="M0 0h32v6H0z" fill="#00a3e8"/><path d="M3 9.500h20M3 14h20M3 23h20M3 28h20" stroke="#8a6ab0" stroke-width="1.500"/><path d="M26 8h3v8h-3zM26 21h3v8h-3zM1 19h30" fill="none" stroke="#55208a" stroke-width="1.500"/></svg></div>
    <div class="tbtn"><svg viewBox="0 0 24 24"><use href="#i-plot"/></svg></div>
    <div class="tray"><span>DE</span><svg viewBox="0 0 44 20" width="44" height="20"><path d="M4 12.500l4-4 4 4z" fill="#fff"/><path d="M25 8h3l5-5v15l-5-5h-3z" fill="#fff" stroke="#456"/><path d="M35 7q3 4 0 7M38 5q3 5 0 11" fill="none" stroke="#fff" stroke-width="1.200"/></svg><time>10:33<br>03.04.2017</time><i class="peek"></i></div>
  </div>

  <section class="win dd">
    <div class="wtitle"><svg class="ti"><use href="#i-plot"/></svg><span class="tt">Data Display/Untitled 1* [page 1]:1</span><div class="wbtns"><i class="min"></i><i class="max"></i><i class="cls red">×</i></div></div>
    <div class="wbody">
      <nav class="menubar"><span style="width:34px">File</span><span style="width:36px">Edit</span><span style="width:40px">View</span><span style="width:46px">Insert</span><span style="width:53px">Marker</span><span style="width:55px">History</span><span style="width:58px">Options</span><span style="width:43px">Tools</span><span style="width:42px">Page</span><span style="width:60px">Window</span><span>Help</span></nav>
      <div class="tb"><div class="grp last"><i class="hd"></i><svg class="ic"><use href="#i-new"/></svg><svg class="ic"><use href="#i-open"/></svg><svg class="ic"><use href="#i-save"/></svg><svg class="ic"><use href="#i-print"/></svg><i class="sep"></i><svg class="ic"><use href="#i-arrow"/></svg><i class="sep"></i><svg class="ic g1"><use href="#i-x"/></svg><i class="sep"></i><svg class="ic bl"><use href="#i-undo"/></svg><svg class="ic g9"><use href="#i-redo"/></svg><i class="sep"></i><svg class="ic"><use href="#i-fit"/></svg><svg class="ic"><use href="#i-zarea"/></svg><svg class="ic"><use href="#i-z2r"/></svg><svg class="ic"><use href="#i-z2g"/></svg><svg class="ic"><use href="#i-zeq"/></svg><svg class="ic"><use href="#i-refresh"/></svg><i class="sep"></i><svg class="ic g8"><use href="#i-left"/></svg><svg class="ic g8"><use href="#i-right"/></svg><i class="sep"></i><svg class="ic"><use href="#i-nbox"/></svg></div></div>
      <div class="tb"><div class="grp last"><i class="hd"></i><div class="combo ds"><span>BT</span></div><i class="sep tight"></i><svg class="ic"><use href="#i-first"/></svg><svg class="ic g4"><use href="#i-left"/></svg><svg class="ic"><use href="#i-prev"/></svg><svg class="ic"><use href="#i-next"/></svg><svg class="ic g4"><use href="#i-right"/></svg><svg class="ic"><use href="#i-last"/></svg><i class="sep"></i><svg class="ic"><use href="#i-gfit"/></svg><svg class="ic"><use href="#i-ga"/></svg><svg class="ic"><use href="#i-gp"/></svg><svg class="ic"><use href="#i-gm"/></svg><i class="sep"></i><svg class="ic"><use href="#i-plotsave"/></svg></div></div>
      <div class="tb"><div class="grp last"><i class="hd"></i><svg class="ic"><use href="#m-1"/></svg><svg class="ic"><use href="#m-2"/></svg><svg class="ic"><use href="#m-3"/></svg><svg class="ic"><use href="#m-4"/></svg><svg class="ic"><use href="#m-5"/></svg><svg class="ic"><use href="#m-6"/></svg><svg class="ic g8"><use href="#i-left"/></svg><svg class="ic g8"><use href="#i-right"/></svg><svg class="ic"><use href="#m-7"/></svg><svg class="ic"><use href="#m-8"/></svg><svg class="ic"><use href="#m-9"/></svg></div></div>
      <div class="ddrow">
        <aside class="ddpal">
          <div class="dock"><span>Palette</span><svg viewBox="0 0 26 12"><path d="M3.500 1.500h6v5h-6zM.5 4.500h6v5h-6z" class="dk"/><path d="M17 1l8 9M25 1l-8 9" class="dk"/></svg></div>
          <div class="dgrid">
            <div class="db"><svg viewBox="0 0 32 32"><path d="M8 2v22l5-4 5 11 4-2-5-10h7z" fill="#fff" stroke="#222" stroke-width="1.300"/></svg></div>
            <div class="db"><svg viewBox="0 0 32 32"><path d="M1 1h30v30H1zM11 1v30M21 1v30M1 9h30M1 17h30M1 24h30" class="pb"/></svg></div>
            <div class="db"><svg viewBox="0 0 32 32"><circle cx="16" cy="16" r="14.500" class="pb"/><circle cx="16" cy="16" r="8.500" class="pb w"/><path d="M16 1v30M1 16h30" class="pb"/></svg></div>
            <div class="db"><svg viewBox="0 0 32 32"><circle cx="16" cy="16" r="14.500" class="pb thin"/><path d="M1 16h30M30 16Q16 13 9 3.500M30 16Q16 19 9 28.500M30 15Q20 11 21 2.500M30 17Q20 21 21 29.500" class="pn thin"/><path d="M25 8.500a10 10 0 1 0 0 15" class="pn thin"/></svg></div>
            <div class="db"><svg viewBox="0 0 32 32"><path d="M1 2h30v12H1zM1 8h30M11 2v12M21 2v12M1 20h30v12H1zM1 26h30M11 20v12M21 20v12" class="pb"/></svg></div>
            <div class="db"><svg viewBox="0 0 32 32"><rect x=".8" y=".8" width="30.400" height="30.400" rx="2" class="pb"/><text x="3" y="13.500" class="dn" textLength="27">1234</text><text x="3" y="27.500" class="dn" textLength="27">5678</text></svg></div>
            <div class="db"><svg viewBox="0 0 32 32"><circle cx="15" cy="17" r="13.500" class="pb thin"/><circle cx="15" cy="17" r="7" class="pn thin"/><path d="M15 3v28M1 17h28M5 7l20 20M25 7L5 27" class="pn thin"/><path d="M24.500 7l6.500 24H18z" fill="#e0102a" stroke="#fff"/><circle cx="24" cy="3" r="2.500" fill="#e0102a"/></svg></div>
            <div class="db"><svg viewBox="0 0 32 32"><rect x=".8" y=".8" width="30.400" height="30.400" rx="2" class="pb"/><text x="3" y="21" class="eq" textLength="26" lengthAdjust="spacingAndGlyphs">Eqn</text></svg></div>
            <div class="db"><svg viewBox="0 0 32 32"><path d="M1 1l30 30" class="pn"/></svg></div>
            <div class="db"><svg viewBox="0 0 32 32"><path d="M16 1l15 15-14 15h-5l2-12L1 17z" class="pl"/></svg></div>
            <div class="db"><svg viewBox="0 0 32 32"><path d="M2 16L16 1l15 15-12 15h-5l1-11" class="pn"/></svg></div>
            <div class="db"><svg viewBox="0 0 32 32"><path d="M1 7.500h30v17H1z" class="pl"/></svg></div>
            <div class="db"><svg viewBox="0 0 32 32"><circle cx="16" cy="16" r="14.500" class="pl"/></svg></div>
            <div class="db"><svg class="letter" viewBox="0 0 32 38"><text x="16" y="34" text-anchor="middle" class="ta-a">A</text></svg></div>
          </div>
        </aside>
        <div class="ddmain">
          <div class="sheetrow">
          <svg class="page" viewBox="198 590 803 355" width="803" height="355">
            <g shape-rendering="crispEdges" fill="none">
              <path d="M286.500 669v168M320.500 669v168M353.500 669v168M386.500 669v168M419.500 669v168M453.500 669v168M486.500 669v168M254 702.500h265M254 736.500h265M254 769.500h265M254 803.500h265" stroke="#b4b4b4"/>
              <path d="M246 668.500h273.500V837.500H246M253.500 668v177M246 702.500h7M246 736.500h7M246 769.500h7M246 803.500h7M250 685.500h3M250 719.500h3M250 753.500h3M250 786.500h3M250 820.500h3M286.500 837v8M320.500 837v8M353.500 837v8M386.500 837v8M419.500 837v8M453.500 837v8M486.500 837v8M519.500 837v8" stroke="#000"/>
              <path d="M253 839.500H519" stroke="#000" stroke-width="4" stroke-dasharray="1 5.650"/>
              <path d="M250.500 612.500h106v39h-106zM661.500 600.500h185v51h-185z" stroke="#000"/>
            </g>
            <path d="M260.300 671.300L271.700 673.400H313L335 675 356.700 677C372 679.500 384 683 391 693 399 705 402 722 404.300 740 406.500 765 408.500 800 409.300 837M416.700 837C417.700 797 419.300 760 421.700 727 424.500 695 430 671.500 456.700 669.500H519" class="tr"/>
            <path d="M409 831h8l-4 7z"/>
            <g class="t12"><text x="252.500" y="624" textLength="15">m1</text><text x="252" y="636" textLength="80">freq=2.400GHz</text><text x="252" y="648" textLength="101">dB(S(1,1))=-31.251</text><text x="663.500" y="612" textLength="16">m2</text><text x="663" y="624" textLength="80">freq=2.400GHz</text><text x="663.500" y="636" textLength="114">S(1,1)=0.027 / 10.521</text><text x="663.500" y="648" textLength="180">impedance = Z0 * (1.055 + j0.011)</text><text x="404.500" y="828" textLength="15">m1</text><text x="789.500" y="792" textLength="16">m2</text></g>
            <g class="t8" text-anchor="end"><text x="244" y="671">0</text><text x="244" y="704">-2</text><text x="244" y="738">-4</text><text x="244" y="772">-6</text><text x="244" y="806">-8</text><text x="244" y="839">-10</text></g>
            <g class="t8" text-anchor="middle"><text x="252.500" y="852">0.0</text><text x="285.500" y="852">0.5</text><text x="319.500" y="852">1.0</text><text x="353" y="852">1.5</text><text x="385.500" y="852">2.0</text><text x="419" y="852">2.5</text><text x="452.500" y="852">3.0</text><text x="486" y="852">3.5</text><text x="518.500" y="852">4.0</text></g>
            <g class="gr"><text x="213" y="677" textLength="14">ADS</text><text x="681" y="699" textLength="14">ADS</text></g>
            <g class="rd"><text x="365" y="871" textLength="42">freq, GHz</text><text transform="translate(222.500 774) rotate(-90)" textLength="44">dB(S(1,1))</text><text transform="translate(650.500 814.500) rotate(-90)" textLength="27">S(1,1)</text><text x="730" y="951" textLength="130">freq (100.0MHz to 4.000GHz)</text></g>
            <g fill="none" stroke="#b4b4b4">
              <path d="M805 720.700A88.700 88.700 0 0 0 805 882.700M910 754.300A66.500 66.500 0 1 0 910 848.700M903.300 761.700A44.300 44.300 0 1 0 903.300 841.300M915 781A22.200 22.200 0 1 0 915 822M922 791A12.100 12.100 0 1 0 922 812"/><circle cx="921.500" cy="801.500" r="6"/>
              <g id="arcs"><path d="M671 751.500A665 665 0 0 0 839 795M716 697.300A266 266 0 0 0 802.700 770.500M795.200 668.300A133 133 0 0 0 884 795M873.300 695.700A66.500 66.500 0 0 0 887.300 787.300M916.700 750.700A26.600 26.600 0 0 0 908 792.400M925.400 775.200A13.300 13.300 0 0 0 917.700 796.600M927.400 788.200A6.700 6.700 0 0 0 925 800"/></g>
              <use href="#arcs" transform="matrix(1 0 0 -1 0 1603)"/>
            </g>
            <g class="gr" text-anchor="middle"><text transform="translate(748 795) rotate(-90)">0.5</text><text transform="translate(791.500 795) rotate(-90)">1.0</text><text transform="translate(837 795) rotate(-90)">2.0</text><text transform="translate(881 795) rotate(-90)">5.0</text><text transform="translate(901 795) rotate(-90)">10</text><text transform="translate(913 795) rotate(-90)">20</text><text transform="translate(792 674) rotate(-90)">1.0</text><text transform="translate(792 926) rotate(-90)">1.0</text><text transform="translate(868 699) rotate(-55)">2.0</text><text transform="translate(713 704) rotate(50)">0.5</text><text transform="translate(674 757) rotate(25)">0.2</text><text transform="translate(680 847) rotate(-25)">0.2</text><text transform="translate(718 900) rotate(-50)">0.5</text><text transform="translate(864 903) rotate(55)">-2.0</text><text transform="translate(911 750) rotate(-25)">5.0</text><text transform="translate(908 855) rotate(25)">-5.0</text><text x="920" y="774">10</text><text x="922" y="786">20</text><text x="918" y="822">-20</text><text x="918" y="833">-10</text></g>
            <circle cx="795.200" cy="801.500" r="132.800" fill="none" stroke="#000"/>
            <path d="M662 801.500H928" stroke="#000" shape-rendering="crispEdges"/>
            <path d="M664.500 822C667 842 676 860 690 871 703 882 718 887.500 733.500 887.500 771 887.500 801.500 857 801.500 820 801.500 783 772 752.300 735 752.300 698 752.300 668.500 780 668.500 813 669 850 695 900 753 923 785 934 812 933 839.500 924.500" class="tr"/>
            <path d="M653 790.500h9v29q0 10 2 16-9-20-11-45zM655.500 770l6.500-2v12l-6.500-3zM657 763h5v2h-3v6h-2zM661 750h1.500v11H661zM656 784h5.500v6H656z"/><path d="M657 785h3v3h-3z" fill="#fff"/>
            <path d="M794.500 795h8l-4 7z"/>
          </svg>
          <div class="vs"><b class="au"></b><i class="thumb"></i><b class="ad"></b></div>
          </div>
          <div class="hs"><b class="al"></b><i class="thumb"></i><b class="ar"></b></div>
          <div class="tabs"><svg viewBox="0 0 410 15" width="410" height="15"><path d="M0 0q4 14 7 14.500H401Q405 14 409 0z" fill="#fff"/><path d="M.5 0q3 14 7 14.300H401Q405 14 408.500 0" fill="none" stroke="#000"/><text x="204" y="12" text-anchor="middle" class="pg" textLength="34">page 1</text></svg></div>
        </div>
      </div>
    </div>
  </section>

  <section class="win tune">
    <div class="wtitle"><svg class="ti" viewBox="0 0 32 32"><path d="M0 0h32v24H0z" fill="url(#gAds)"/><path d="M0 24h32v3H0z" fill="#777"/><path d="M0 26h32v6H0z" fill="#e4002b"/><path d="M2 20h5V5h7v15h3q3 0 4-8 2-9 4-4l4 13" fill="none" stroke="#f8d8a0" stroke-width="2.800"/></svg><span class="tt">Tune Parameters</span><div class="wbtns"><i class="cls">×</i></div></div>
    <div class="wbody tbody">
      <div class="tleft">
        <fieldset class="f1"><legend>Simulate</legend><div class="combo"><span>While Slider Moves</span></div><button disabled>Tune</button></fieldset>
        <fieldset class="f2"><legend>Parameters</legend><button>Include Opt Params</button><button>Enable/Disable...</button></fieldset>
        <label class="snap"><i></i>Snap Slider to Step</label>
        <fieldset class="f3"><legend>Traces and Values</legend><div class="two"><button>Store...</button><button disabled>Recall...</button></div><button disabled class="tv">Trace Visibility...</button><button>Reset Values</button></fieldset>
        <button class="upd">Update Schematic</button>
        <div class="two bot"><button>Close</button><button>Help</button></div>
      </div>
      <div class="tright">
        <div class="lib-name">FindMeSAT_lib:BT:schematic</div>
        <div class="params">
          <fieldset class="pm first"><legend>C1.C</legend><p class="unit">(pF)</p>
            <div class="prow"><label>Value</label><span class="in">6.8</span></div><div class="prow"><label>Max</label><span class="in">50</span></div>
            <div class="sl"><svg viewBox="0 0 32 125"><use href="#track"/><use href="#knob" y="104"/></svg><div class="ud"><button>▲</button><button>▼</button></div></div>
            <div class="prow"><label>Min</label><span class="in">0.1</span></div><div class="prow"><label>Step</label><span class="in">0.1</span></div><div class="prow"><label>Scale</label><div class="combo lin"><span>Lin</span></div></div></fieldset>
          <fieldset class="pm"><legend>C2.C</legend><p class="unit">(pF)</p>
            <div class="prow"><span class="in">0.1</span></div><div class="prow"><span class="in">30</span></div>
            <div class="sl"><svg viewBox="0 0 32 125"><defs><g id="track"><path d="M9.500.500h3v124h-3z" fill="#e8e8e8" stroke="#b8b8b8"/><path d="M12.500 1v124" stroke="#fff"/><path d="M21 5.500h5M21 17.500h4M21 28.500h4M21 40.500h4M21 51.500h4M21 63.500h4M21 74.500h4M21 86.500h4M21 97.500h4M21 109.500h4M21 120.500h5" stroke="#a8a596"/></g><path id="knob" d="M4.500-4h11l4.500 4.500-4.500 4.500h-11q-1 0-1-1v-7q0-1 1-1z" fill="#f4f4f4" stroke="#6e6e6e"/></defs><use href="#track"/><use href="#knob" y="119"/></svg><div class="ud"><button>▲</button><button>▼</button></div></div>
            <div class="prow"><span class="in">0.1</span></div><div class="prow"><span class="in">0.1</span></div><div class="prow"><div class="combo lin"><span>Lin</span></div></div></fieldset>
          <fieldset class="pm"><legend>R1.R</legend><p class="unit">(Ohm)</p>
            <div class="prow"><span class="in">1.5</span></div><div class="prow"><span class="in">3.3</span></div>
            <div class="sl"><svg viewBox="0 0 32 125"><use href="#track"/><use href="#knob" y="68"/></svg><div class="ud"><button>▲</button><button>▼</button></div></div>
            <div class="prow"><span class="in">0.1</span></div><div class="prow"><span class="in">0.1</span></div><div class="prow"><div class="combo lin"><span>Lin</span></div></div></fieldset>
          <fieldset class="pm"><legend>TL1.L</legend><p class="unit">(mm)</p>
            <div class="prow"><span class="in">27.1</span></div><div class="prow"><span class="in">100</span></div>
            <div class="sl"><svg viewBox="0 0 32 125"><use href="#track"/><use href="#knob" y="109"/></svg><div class="ud"><button class="hot">▲</button><button>▼</button></div></div>
            <div class="prow"><span class="in">20</span></div><div class="prow"><span class="in">0.1</span></div><div class="prow"><div class="combo lin"><span>Lin</span></div></div></fieldset>
        </div>
      </div>
    </div>
  </section>
</div>
</body>
</html>
```
FILE: styles.css
```css
* { box-sizing: border-box; }
body { margin: 0; font: 12px "Open Sans", "Noto Sans", sans-serif; color: #000; }
.defs { position: absolute; }
.screen { position: relative; width: 1920px; height: 1080px; overflow: hidden; background: #f0f0f0; display: flex; flex-direction: column; }
i { font-style: normal; display: block; }
p { margin: 0; }

/* title bars */
.titlebar { height: 22px; flex: none; display: flex; align-items: center; gap: 5px; padding: 0 2px 2px; background: linear-gradient(#bccddc, #d9e6f3); color: #3c4650; }
.ti { width: 16px; height: 16px; flex: none; }
.tt { letter-spacing: -.38px; white-space: nowrap; flex: 1; }
.titlebar .tt { letter-spacing: -.2px; }
.wbtns { display: flex; gap: 2px; }
.wbtns i { width: 31px; height: 16px; border: 1px solid #8496aa; border-radius: 3px; background: linear-gradient(#dfe8f2, #c4d2e2); display: flex; align-items: center; justify-content: center; font: bold 15px/12px "Liberation Sans", sans-serif; color: #5a6570; }
.wbtns .min::before { content: ""; width: 10px; height: 4px; border: 1px solid #4a5866; background: #fff; margin-top: 4px; }
.wbtns .max::before { content: ""; width: 9px; height: 7px; border: 2px solid #fff; outline: 1px solid #4a5866; background: #678; }
.wbtns .red { background: linear-gradient(#e0a090, #c44a35 50%, #b03018 51%, #d07050); color: #fff; border-color: #5a2018; }

/* menus */
.menubar { height: 21px; flex: none; display: flex; align-items: center; padding-left: 8px; background: linear-gradient(#fff, #f2f4fb 45%, #d8dff0 46%, #e4e9f7); border-bottom: 1px solid #b4b8c4; letter-spacing: -.3px; white-space: nowrap; }
.menubar.dis { color: #999ea8; padding-bottom: 1px; }

/* toolbars */
.tb { height: 34px; flex: none; display: flex; background: linear-gradient(#f2f2f2, #efefef); border-bottom: 1px solid #b8b8b8; }
.grp { display: flex; align-items: center; gap: 7px; padding: 0 5px 0 4px; border-right: 1px solid #bdbdbd; }
.grp.last { border-right: 0; }
.win .grp.last { padding-left: 3px; }
.hd { width: 3px; height: 26px; margin-right: -1px; background: repeating-linear-gradient(#bbb 0 2px, transparent 2px 4px); }
.sep { width: 1px; height: 24px; margin: 0 -1px; background: #cfcfcf; }
.sep.tight { margin: 0 -2.500px; }
.ic { width: 24px; height: 24px; flex: none; overflow: visible; }
.g1 { color: #161616; } .g4 { color: #333; } .g6 { color: #666; } .g8 { color: #888; } .g9 { color: #9a9a9a; } .bl { color: #1d6cc0; }
.znum { font: bold 14px "Liberation Sans", sans-serif; fill: #fff; }
.ib { font: bold 9px "Liberation Sans", sans-serif; fill: #777; }
.v1 { font: 9px "Liberation Sans", sans-serif; }
.v2 { font: bold 11px "Liberation Sans", sans-serif; }
.mk { fill: none; stroke: #55208a; stroke-width: 1.400; }
.mkg { fill: none; stroke: #999; stroke-width: 1.400; }

/* combos */
.combo { height: 20px; display: flex; align-items: center; justify-content: space-between; padding: 0 5px 0 3px; border: 1px solid #707070; border-radius: 2px; background: linear-gradient(#f2f2f2, #ebebeb 49%, #dcdcdc 50%, #cfcfcf); font: 11px "DejaVu Sans Condensed", "DejaVu Sans", sans-serif; letter-spacing: -.35px; white-space: nowrap; }
.combo::after { content: ""; border: 4px solid transparent; border-top-color: #000; border-bottom: 0; flex: none; }
.combo.plain { background: #fff; border-color: #e2e2e2; font: 12px "Open Sans", sans-serif; }
.combo.lib { width: 134px; margin: 0 -3px; padding: 0 3px 0 1px; letter-spacing: -.75px; }
.ds { width: 164px; margin-left: -2px; }
.cat.combo { width: 160px; color: #777; padding-left: 4px; border-color: #bbb; margin: 2px 0 0; letter-spacing: -.1px; }
.cat.combo::after { border-top-color: #aaa; }

/* work area */
.work { flex: 1; min-height: 0; display: flex; }
.comp { width: 160px; flex: none; display: flex; flex-direction: column; padding-top: 1px; }
.dock { height: 19px; flex: none; display: flex; align-items: center; justify-content: space-between; padding: 0 3px 0 0; background: #dadada; border: 1px solid #bcbcbc; border-left: 0; font-size: 11.500px; line-height: 16px; letter-spacing: -.3px; }
.dock svg { width: 26px; height: 12px; }
.dock.dis { color: #777; }
.dk { fill: none; stroke: #111; stroke-width: 1.500; }
.dis .dk { stroke: #555; }
.cgrid { flex: 1; margin: 0 0 2px; padding: 1px 0 0 1px; border: 1px solid #828790; display: grid; grid-template-columns: 42px 42px; grid-auto-rows: 38px; gap: 3px 3px; align-content: start; }
.cb { border: 1px solid #b4b4b4; border-radius: 3px; background: #f3f3f3; display: flex; flex-direction: column; align-items: center; font: 9px/10px "Liberation Sans", sans-serif; letter-spacing: .1px; color: #5a5a5a; padding-top: 4px; }
.cb svg { width: 24px; height: 20px; flex: none; }
.cb svg.fr { width: 28px; height: 20px; margin-top: -20px; }
.cp { fill: none; stroke: #666; stroke-width: 1; }
.sheet { width: 1504px; flex: none; padding-left: 4px; }
.sheetrow { display: flex; }
.schem { display: block; background: #ece9e8; flex: none; }
.st text { font: 19.400px "Liberation Sans", Arial, sans-serif; fill: #00008b; }
.st .a { fill: #1e90ff; } .st .b { fill: #0000ff; }
.vs { width: 16px; margin-left: 2px; background: #ebebeb; display: flex; flex-direction: column; align-items: center; justify-content: space-between; padding: 6px 0; }
.sheet .vs { margin-left: 1px; }
.hs { height: 15px; margin-top: 1px; background: #ebebeb; display: flex; align-items: center; justify-content: space-between; padding: 0 6px; }
.sheet .hs { width: 1479px; }
.hs b, .vs b { border: 4px solid transparent; }
.hs b.al { border-left: 0; border-right-color: #222; }
.hs b.ar { border-right: 0; border-left-color: #222; }
.vs b.au { border-top: 0; border-bottom-color: #444; }
.vs b.ad { border-bottom: 0; border-top-color: #444; }
.thumb { border: 1px solid #989898; border-radius: 2px; background: linear-gradient(#f6f6f6, #d4d4d4); }
.sheet .thumb { width: 44px; height: 14px; background: repeating-linear-gradient(90deg, #555 0 1px, transparent 1px 3px) center / 8px 6px no-repeat, linear-gradient(#f6f6f6, #d4d4d4); }
.props { flex: 1; display: flex; flex-direction: column; padding-top: 1px; }
.props .dock { letter-spacing: -.35px; }
.ptools { height: 21px; margin: 2px 0 7px; display: flex; align-items: center; gap: 15px; padding-left: 8px; background: linear-gradient(#fff, #f0f3fa 40%, #d6ddef 41%, #e2e8f6); }
.q { font: bold 13px "Liberation Sans", sans-serif; fill: #fff; }
.ptable { flex: 1; margin-bottom: 2px; border: 1px solid #828790; background: #fff; }
.phead { height: 22px; display: flex; align-items: center; background: linear-gradient(#fff, #f2f3f5); border-bottom: 1px solid #d5d5d5; letter-spacing: -.2px; font-size: 11.500px; }
.phead span { padding-left: 4px; width: 100px; border-right: 1px solid #e0e0e0; line-height: 20px; }
.phead span + span { border: 0; }

/* status and taskbar */
.status { height: 19px; flex: none; display: flex; align-items: center; letter-spacing: -.3px; white-space: nowrap; padding-left: 5px; }
.status span { border-right: 1px solid #d0d0d0; padding-left: 8px; line-height: 16px; }
.status .grow { flex: 1; padding-left: 0; }
.status .lnk { color: #0000d0; letter-spacing: -.25px; }
.status .grip { border: 0; }
.taskbar { height: 40px; flex: none; display: flex; align-items: center; border-top: 1px solid #46525f; background: linear-gradient(90deg, #7f92aa 0, #8497af 50px, #a7c0dc 95px, #a7c0dc 1695px, #8094ab 1745px); }
.orb { width: 40px; height: 38px; margin: 0 26px 0 7px; }
.ta { width: 32px; height: 32px; margin-right: 30px; flex: none; }
.cmd { font: 8px "Liberation Mono", monospace; fill: #fff; }
.tbtn { width: 58px; height: 39px; border: 1px solid #5f7287; border-radius: 3px; background: linear-gradient(135deg, #f4f7fa, #c9d7e6 60%, #dbe6f1); display: flex; align-items: center; justify-content: center; margin-left: 4px; flex: none; }
.tbtn svg { width: 32px; height: 32px; }
.tbtn.stack { width: 51px; margin: 0 8px 0 -14px; background: linear-gradient(135deg, #dfe9f3, #9eb3ca); box-shadow: 3px 0 0 -1px #c0cfe0, 5px 0 0 -1px #5f7287; }
.tray { margin-left: auto; height: 100%; display: flex; align-items: center; color: #fff; letter-spacing: -.3px; }
.tray span { margin-right: 13px; margin-top: -3px; }
.tray svg { margin-right: 12px; }
.tray time { text-align: center; line-height: 17px; margin-right: 10px; width: 58px; }
.peek { width: 15px; height: 100%; border: 1px solid #4c5a6a; background: linear-gradient(#a5b2c1, #54606f 50%, #6a7787); }

/* floating windows */
.win { position: absolute; border: 1px solid #222; border-radius: 6px 6px 0 0; display: flex; flex-direction: column; padding: 0 7px 7px; }
.wtitle { height: 28px; flex: none; display: flex; align-items: center; gap: 4px; padding-left: 2px; }
.wbody { flex: 1; min-height: 0; background: #f0f0f0; display: flex; flex-direction: column; overflow: hidden; }
.dd { left: 79px; top: 438px; width: 946px; height: 547px; padding-left: 6px; background: linear-gradient(#99b4d1, #b9d1ea 28px); box-shadow: inset -1px -1px 0 #35b8e0; }
.dd .wtitle { padding: 5px 1px 0 2px; }
.dd .wtitle .wbtns { align-self: flex-start; margin-top: 4px; }
.dd .wbtns i { border-color: #5f7790; background: linear-gradient(#c5d6e8, #a3bbd5); }
.dd .wbtns .red { background: linear-gradient(#e0a090, #c44a35 50%, #b03018 51%, #d07050); border-color: #5a2018; }
.dd .menubar { padding-bottom: 1px; }
.ddrow { flex: 1; display: flex; min-height: 0; }
.ddpal { width: 107px; margin-right: 5px; flex: none; padding-top: 1px; display: flex; flex-direction: column; }
.dgrid { flex: 1; margin-top: 2px; border: 1px solid #828790; border-width: 1px 1px 1px 0; display: grid; grid-template-columns: 42px 42px; grid-auto-rows: 38px; gap: 3px; padding: 1px 0 0 2px; align-content: start; }
.db { border: 1px solid #707070; border-radius: 3px; background: linear-gradient(#f2f2f2, #ebebeb 49%, #dddddd 50%, #d2d2d2); display: flex; align-items: center; justify-content: center; }
.db svg { width: 32px; height: 32px; }
.db svg.letter { height: 36px; }
.pb { fill: url(#gBlue); stroke: #55208a; stroke-width: 1.600; }
.pb.w { fill: #f0f2f8; }
.pn { fill: none; stroke: #55208a; stroke-width: 1.800; }
.pb.thin, .pn.thin { stroke-width: 1.200; }
.pl { fill: #c4bee4; stroke: #55208a; stroke-width: 1.600; }
.dn { font: bold 12px "Liberation Sans", sans-serif; }
.eq { font: bold 15px "Liberation Sans", sans-serif; }
.ta-a { font: bold 44px/1 "Liberation Serif", serif; fill: url(#gLetter); }
.page { display: block; background: #fff; flex: none; }
.tr { fill: none; stroke: #f00; }
.t12 text { font: 12px "Liberation Sans", Arial, sans-serif; }
.t8 text { font: 8px "Liberation Sans", Arial, sans-serif; }
.gr text { font: 8px "Liberation Sans", Arial, sans-serif; fill: #9c9c9c; }
.rd text { font: 9.500px "Liberation Sans", Arial, sans-serif; fill: #f00; }
.dd .vs { margin-left: 0; padding: 6px 0; }
.dd .vs .thumb { width: 15px; height: 17px; margin: -100px 0 0; }
.dd .hs { width: 801px; margin-top: 1px; }
.dd .hs .thumb { width: 16px; height: 15px; margin-left: -251px; }
.tabs { height: 15px; margin-top: 1px; }
.tabs svg { display: block; }
.pg { font: 11px "DejaVu Sans Condensed", sans-serif; }

/* tune dialog */
.tune { left: 1078px; top: 506px; width: 832px; height: 478px; background: linear-gradient(#bccad8, #d7e4f2 30px); border-color: #4a4f55; font: 11px "DejaVu Sans Condensed", "DejaVu Sans", sans-serif; letter-spacing: -.35px; }
.tune .wtitle { height: 29px; padding-top: 7px; margin-bottom: 1px; font: 12px "Open Sans", sans-serif; color: #4a5560; }
.tune .tt { letter-spacing: -.05px; }
.tune .wtitle .wbtns { margin: -2px 2px 0 0; }
.tbody { flex-direction: row; padding: 8px 12px 8px 16px; }
.tleft { width: 180px; border-right: 1px solid #000; flex: none; padding-top: 14px; }
fieldset { position: relative; margin: 0; border: 1px solid #d5dfe5; border-radius: 3px; box-shadow: inset 0 0 0 1px #fbfbfb; min-width: 0; padding: 0; }
legend { position: absolute; top: -8px; left: 5px; padding: 0 2px; background: #f0f0f0; line-height: 15px; white-space: nowrap; }
button { display: block; height: 21px; padding: 0; border: 1px solid #707070; border-radius: 3px; background: linear-gradient(#f2f2f2, #ebebeb 49%, #dddddd 50%, #cfcfcf); font: inherit; letter-spacing: inherit; color: #000; }
button:disabled { border-color: #adb2b5; background: #f4f4f4; color: #838383; }
.tleft fieldset { width: 167px; }
.tleft fieldset > button { width: 155px; margin-left: 5px; }
.f1 { height: 62px; padding-top: 11px; margin-bottom: 10px; }
.f1 .combo { width: 157px; margin: 0 0 4px 4px; }
.f2 { height: 65px; padding-top: 12px; }
.f2 button + button { margin-top: 5px; }
.snap { display: flex; align-items: center; gap: 4px; margin: 21px 0 27px; height: 14px; letter-spacing: -.2px; }
.snap i { width: 13px; height: 13px; border: 1px solid #8e8f8f; background: linear-gradient(135deg, #c8ccd2, #fff); box-shadow: inset 0 0 0 2px #f4f4f4; }
.f3 { height: 95px; padding-top: 14px; }
.two { display: flex; gap: 5px; margin-left: 7px; }
.two button { width: 73px; }
.f3 .tv { margin: 7px 0 5px 5px; }
.upd { width: 165px; margin: 18px 0 32px 1px; }
.bot { margin-left: 3px; }
.bot button { width: 78px; }
.tright { flex: 1; margin: 4px 0 4px 8px; border: 1px solid #828790; padding: 9px 0 0 7px; }
.lib-name { line-height: 16px; padding-left: 2px; letter-spacing: -.38px; }
.params { display: flex; gap: 3px; margin-top: 87px; }
.pm { width: 77px; height: 289px; margin-top: 2px; padding: 14px 0 0 4px; display: flex; flex-direction: column; gap: 3px; }
.unit { height: 16px; line-height: 16px; padding-left: 10px; margin-bottom: 2px; }
.prow { display: flex; align-items: center; height: 20px; }
.prow label { width: 32px; }
.in { width: 50px; height: 20px; border: 1px solid #e2e3ea; border-top-color: #abadb3; border-radius: 2px; background: #fff; padding: 0 3px; line-height: 19px; letter-spacing: 0; }
.lin { width: 50px; padding: 0 5px 0 2px; }
.sl { display: flex; height: 125px; margin: 4px 0 5px; }
.sl svg { width: 32px; height: 125px; flex: none; overflow: visible; }
.ud { padding-top: 18px; }
.ud button { width: 30px; height: 26px; display: flex; align-items: center; justify-content: center; font: 15px/19px "DejaVu Sans", sans-serif; letter-spacing: 0; margin-bottom: 38px; background: linear-gradient(#f2f2f2, #cfcfcf); box-shadow: inset 0 0 0 3px #e4e4e4, inset 0 0 0 4px #222; }
.ud .hot { border-color: #3c7fb1; background: #d8f0fb; box-shadow: inset 0 0 0 3px #55c4f0, inset 0 0 0 4px #222; }
.first { width: 113px; height: 294px; margin-top: 0; padding-left: 8px; gap: 4px; }
.first .unit { padding-left: 6px; margin-bottom: 1px; }
.first .sl { margin: 4px 0 4px 32px; }
```
